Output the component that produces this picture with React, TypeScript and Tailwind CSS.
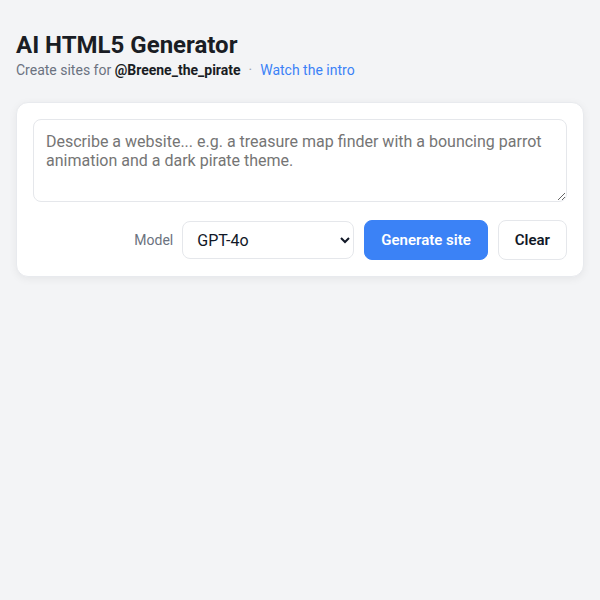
import React from "react";

export default function App() {
  return (
    <div
      className="min-h-[600px] bg-[#f3f4f6] px-4 pt-[29px]"
      style={{ fontFamily: "Roboto, 'Liberation Sans', sans-serif" }}
    >
      <h1 className="text-[24px] font-bold leading-8 text-[#1a1d24]">AI HTML5 Generator</h1>
      <p className="text-[14px] leading-[18px] text-[#6b7280]">
        Create sites for <span className="font-bold text-[#1a1d24]">@Breene_the_pirate</span>
        <span className="mx-2 text-[#9ca3af]">·</span>
        <span className="text-[#3b82f6]">Watch the intro</span>
      </p>

      <div className="mt-[23px] rounded-xl border border-[#e8eaee] bg-white p-4 shadow-[0_2px_8px_rgba(0,0,0,0.06)]">
        <textarea
          className="block h-[83px] w-full resize-y rounded-lg border border-[#e5e7eb] p-3 text-[16px] leading-[1.2] text-[#111827] placeholder:text-[#757575] outline-none"
          placeholder="Describe a website... e.g. a treasure map finder with a bouncing parrot animation and a dark pirate theme."
        />
        <div className="mt-[18px] flex items-center justify-end gap-[10px]">
          <label className="mr-[-1px] text-[14px] text-[#6b7280]">Model</label>
          <select
            className="h-[38px] w-[172px] rounded-lg border border-[#e5e7eb] bg-white pl-[10px] pr-2 text-[16px] text-[#111827]"
            defaultValue="gpt-4o"
          >
            <option value="gpt-4o">GPT-4o</option>
            <option value="gpt-4o-mini">GPT-4o mini</option>
          </select>
          <button className="h-10 rounded-lg border border-[#3b82f6] bg-[#3b82f6] px-4 text-[15px] font-semibold text-white">
            Generate site
          </button>
          <button className="h-10 rounded-lg border border-[#e5e7eb] bg-white px-4 text-[15px] font-semibold text-[#111827]">
            Clear
          </button>
        </div>
      </div>
    </div>
  );
}
